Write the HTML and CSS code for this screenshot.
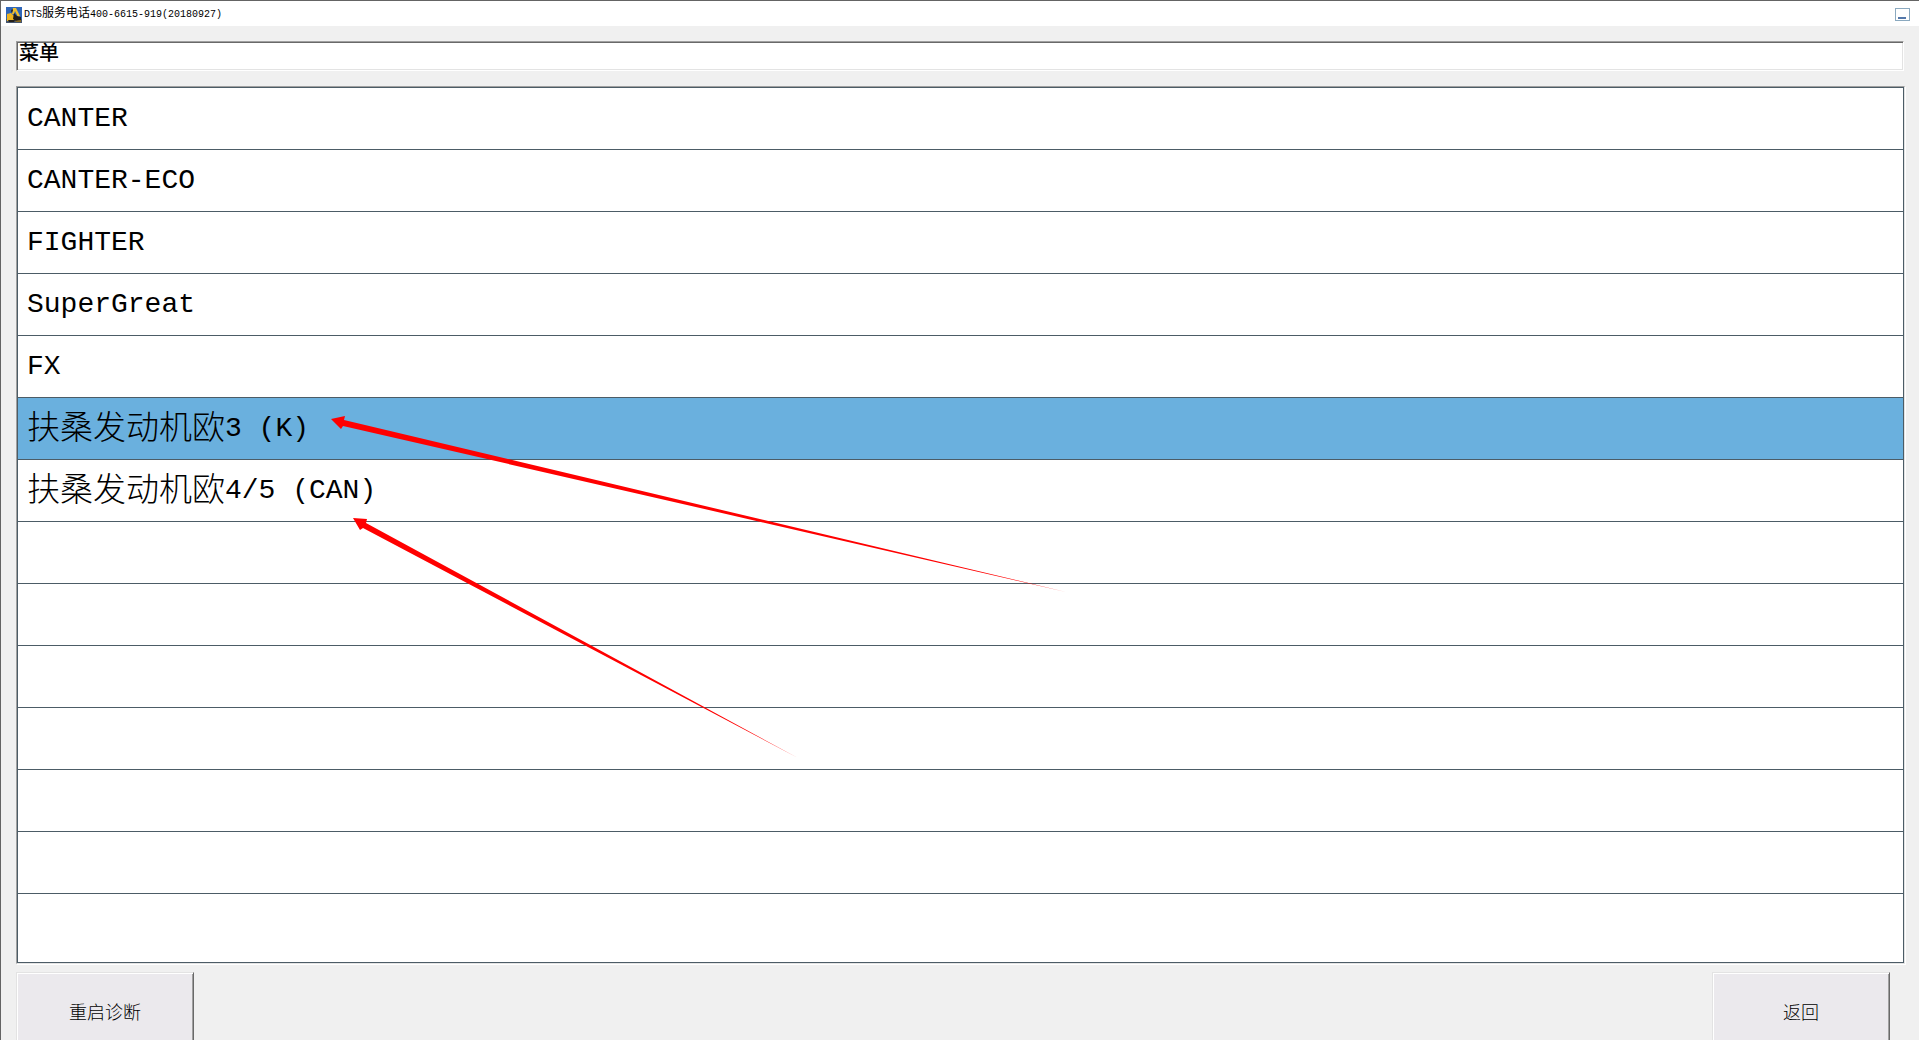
FILE: index.html
```html
<!DOCTYPE html>
<html lang="zh-CN">
<head>
<meta charset="utf-8">
<title>DTS</title>
<link rel="stylesheet" href="styles.css">
</head>
<body>
<div class="window">
  <header class="titlebar">
    <svg class="app-icon" width="16" height="16" viewBox="0 0 16 16" aria-hidden="true">
      <rect width="16" height="16" fill="#2f66b8"/>
      <path d="M0 12h16v4H0z" fill="#46566e"/>
      <path d="M7 1h3l4 8-2 1-3-6-1 3H6z" fill="#f2c02c"/>
      <path d="M1 7l4-1 3 3v4l-3 1H1z" fill="#efb51f"/>
      <path d="M8 6l3 3 4 1v3l-5 1-3-2zM2 13h7l-1 2H3zM5 4l1-2 1 1-1 3z" fill="#241f1a"/>
      <path d="M9 14l6-1v2h-5z" fill="#8c6a1c"/>
    </svg>
    <span class="title">DTS<span class="cjk">服务电话</span>400-6615-919(20180927)</span>
    <button class="minimize" aria-label="最小化"></button>
  </header>
  <main class="content">
    <h1 class="caption">菜单</h1>
    <ul class="menu">
      <li><button class="item">CANTER</button></li>
      <li><button class="item">CANTER-ECO</button></li>
      <li><button class="item">FIGHTER</button></li>
      <li><button class="item">SuperGreat</button></li>
      <li><button class="item">FX</button></li>
      <li><button class="item selected"><span class="cjk">扶桑发动机欧</span>3 (K)</button></li>
      <li><button class="item"><span class="cjk">扶桑发动机欧</span>4/5 (CAN)</button></li>
      <li></li><li></li><li></li><li></li><li></li><li></li><li></li>
    </ul>
    <footer class="actions">
      <button class="action">重启诊断</button>
      <button class="action">返回</button>
    </footer>
  </main>
  <svg class="arrows" width="1100" height="800" viewBox="0 0 1100 800" aria-hidden="true">
    <path fill="#f00" d="M331 419l14-3-1 4L1066 592 343 426l-2 3z"/>
    <path fill="#f00" d="M353 518l14 1-1 4L798 758 363 528l-3 2z"/>
  </svg>
</div>
</body>
</html>
```
FILE: styles.css
```css
* { box-sizing: border-box; }
body { margin: 0; overflow: hidden; }
button { font: inherit; color: inherit; }

.window {
  position: relative;
  height: 100vh;
  overflow: hidden;
  background: #f0f0f0;
  border-top: 1px solid #646464;
  border-left: 1px solid #646464;
  font-family: "Liberation Mono", "Noto Sans CJK SC", monospace;
  color: #000;
}
.titlebar {
  display: flex;
  align-items: center;
  gap: 2px;
  height: 25px;
  padding: 2px 9px 0 5px;
  background: #fff;
}
.app-icon { flex: none; }
.title { flex: 1; font-size: 10px; line-height: 16px; white-space: nowrap; }
.title .cjk { font-size: 12px; }
.minimize {
  width: 15px;
  height: 13px;
  padding: 7px 3px 0 2px;
  background: #fff;
  border: 1px solid #8ba9bf;
}
.minimize::before { content: ""; display: block; height: 2px; background: #5478aa; }

.content { padding: 15px 13px 0 15px; }
.caption {
  height: 30px;
  margin: 0 2px 15px 0;
  padding: 1px 0 0 2px;
  background: #fff;
  border: 1px solid;
  border-color: #a0a0a0 #fff #fff #a0a0a0;
  box-shadow: inset 1px 1px #696969, inset -1px -1px #e3e3e3;
  font-size: 20px;
  line-height: 24px;
  font-weight: 500;
}
.menu {
  list-style: none;
  margin: 0 1px 0 0;
  padding: 1px;
  background: #fff;
  border: 1px solid;
  border-color: #a0a0a0 #e3e3e3 #e3e3e3 #a0a0a0;
  box-shadow: inset 0 0 0 1px #4c5c66, 1px 1px #fff;
}
.menu li { height: 62px; border-bottom: 1px solid #4c5c66; }
.menu li:last-child { height: 68px; border-bottom: 0; }
.item {
  display: block;
  width: 100%;
  height: 61px;
  padding: 0 9px;
  border: 0;
  background: none;
  text-align: left;
  font-size: 28px;
  line-height: 60px;
  white-space: nowrap;
}
.item.selected { background: #6ab0de; }
.item .cjk {
  font-size: 33px;
  font-weight: 300;
  line-height: 40px;
  vertical-align: -3px;
}

.actions { display: flex; justify-content: space-between; padding: 8px 16px 0 0; }
.action {
  width: 178px;
  height: 78px;
  background: #ebe9ed;
  border: 1px solid;
  border-color: #e3e3e3 #696969 #696969 #e3e3e3;
  box-shadow: inset 1px 1px #fff, inset -1px -1px #a0a0a0;
  font-size: 18px;
  font-weight: 300;
}
.arrows { position: absolute; top: -1px; left: -1px; pointer-events: none; }
```
